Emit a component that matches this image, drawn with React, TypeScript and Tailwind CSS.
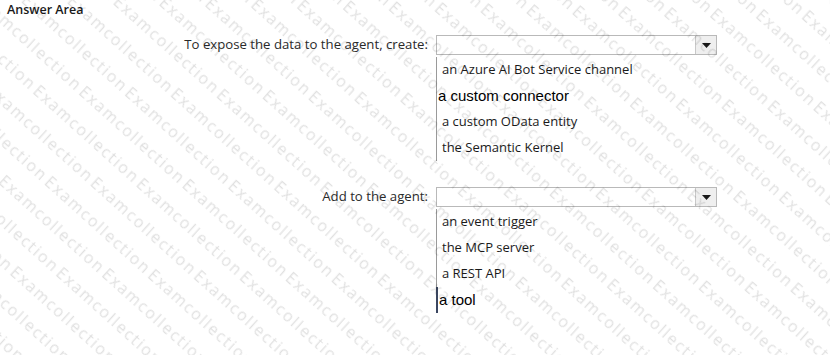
import React from 'react'

type Option = { text: string; plain?: boolean; active?: boolean }

const sections: { label: string; options: Option[] }[] = [
  {
    label: 'To expose the data to the agent, create:',
    options: [
      { text: 'an Azure AI Bot Service channel' },
      { text: 'a custom connector', plain: true },
      { text: 'a custom OData entity' },
      { text: 'the Semantic Kernel' },
    ],
  },
  {
    label: 'Add to the agent:',
    options: [
      { text: 'an event trigger' },
      { text: 'the MCP server' },
      { text: 'a REST API' },
      { text: 'a tool', plain: true, active: true },
    ],
  },
]

const Dropdown = () => (
  <div className="h-[20px] border border-[#b9b9b9] flex bg-white">
    <div className="flex-1" />
    <div className="w-[21px] border-l border-[#c8c8c8] bg-[#efefef] flex items-center justify-center">
      <svg width="9" height="5" viewBox="0 0 9 5">
        <path d="M0 0 L9 0 L4.5 5 Z" fill="#1a1a1a" />
      </svg>
    </div>
  </div>
)

const OptionRow = ({ option }: { option: Option }) => (
  <div
    className={
      option.active
        ? 'h-[26px] flex items-center border-l-2 border-[#3b4660] -ml-[1px]'
        : 'h-[26px] flex items-center'
    }
  >
    {option.plain ? (
      <span className="pl-[1px] text-[15px] text-black font-['Liberation_Sans',Arial,sans-serif]">
        {option.text}
      </span>
    ) : (
      <span className="pl-[5px] text-[13px] text-[#1a1a1a]">{option.text}</span>
    )}
  </div>
)

// repeated diagonal "Examcollection" stamp, done as one svg pattern
const PERIOD = 139
const SHIFT = PERIOD / 4

const Watermark = () => (
  <svg className="absolute inset-0 w-full h-full pointer-events-none" aria-hidden="true">
    <defs>
      <pattern
        id="wm"
        width={PERIOD}
        height={120}
        patternUnits="userSpaceOnUse"
        patternTransform="translate(0 76) rotate(42)"
      >
        {[0, 1, 2, 3].map((k) =>
          [0, 1, 2].map((j) => (
            <text
              key={`${k}-${j}`}
              x={-SHIFT * k + PERIOD * j}
              y={30 * k + 21}
              textLength={PERIOD - 4}
              lengthAdjust="spacing"
              fontSize="16"
              fontFamily="Open Sans, sans-serif"
              fill="rgba(0,0,0,0.12)"
            >
              Examcollection
            </text>
          ))
        )}
      </pattern>
    </defs>
    <rect width="100%" height="100%" fill="url(#wm)" />
  </svg>
)

export default function App() {
  return (
    <div className="relative w-[830px] h-[355px] bg-white overflow-hidden font-['Open_Sans','Noto_Sans',sans-serif] text-[#262626]">
      <div className="h-[35px] pl-[7px] pt-[2px] leading-[16px] text-[12.5px] font-semibold text-[#1a1a1a]">
        Answer Area
      </div>
      {sections.map((s, idx) => (
        <div key={idx} className={idx > 0 ? 'flex mt-[26px]' : 'flex'}>
          <div className="w-[428px] h-[20px] flex items-center justify-end text-[13.2px] text-[#2a2a2a]">
            {s.label}
          </div>
          <div className="ml-[8px] w-[281px]">
            <Dropdown />
            <div className="mt-[2px] border-l border-[#9a9a9a]">
              {s.options.map((o) => (
                <OptionRow key={o.text} option={o} />
              ))}
            </div>
          </div>
        </div>
      ))}
      <Watermark />
    </div>
  )
}
